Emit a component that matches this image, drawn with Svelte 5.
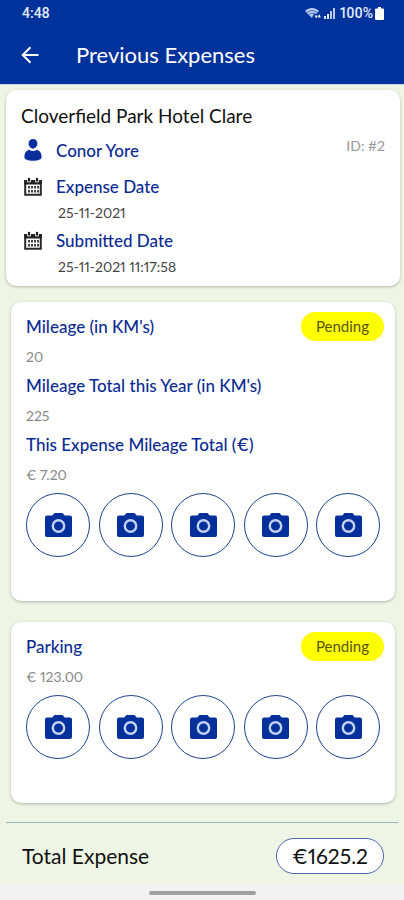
<script lang="ts">
  type Field = { label: string; value: string };
  type Expense = { status: string; fields: Field[] };

  const expenses: Expense[] = [
    {
      status: 'Pending',
      fields: [
        { label: "Mileage (in KM's)", value: '20' },
        { label: "Mileage Total this Year (in KM's)", value: '225' },
        { label: 'This Expense Mileage Total (€)', value: '€ 7.20' },
      ],
    },
    {
      status: 'Pending',
      fields: [{ label: 'Parking', value: '€ 123.00' }],
    },
  ];

  const dates: Field[] = [
    { label: 'Expense Date', value: '25-11-2021' },
    { label: 'Submitted Date', value: '25-11-2021 11:17:58' },
  ];

  const photoSlots = [1, 2, 3, 4, 5];
</script>

<div class="screen">
  <header>
    <div class="status-bar">
      <span>4:48</span>
      <div class="status-right">
        <svg width="17" height="13" viewBox="0 0 17 13" aria-hidden="true">
          <path d="M0 4C4 0 10 0 14 4L10.500 7.500V6.500H9L7 11Z" fill="#b9c8ee" />
          <path d="M2 5.500C5 3 9 3 12 5.500M4 7.500C6 6 8 6 9.500 7" fill="none" stroke="#00329b" stroke-width=".6" />
          <path d="M9.500 8.500l1.700 3 1.700-3zM12.500 10.500l1.700-3.500 1.700 3.500z" fill="#e4eafa" />
        </svg>
        <svg width="11" height="12" viewBox="0 0 11 12" aria-hidden="true">
          <path d="M0 9h2v3H0zM3 7h2v5H3z" fill="#e4eafa" />
          <path d="M6 4h2v8H6zM9 1h2v11H9z" fill="#b9c8ee" />
        </svg>
        <span class="percent">100%</span>
        <svg width="9" height="13" viewBox="0 0 9 13" aria-hidden="true">
          <path d="M3 0h3v1.500h2a1 1 0 0 1 1 1V12a1 1 0 0 1-1 1H1a1 1 0 0 1-1-1V2.500a1 1 0 0 1 1-1h2z" fill="#fff" />
        </svg>
      </div>
    </div>
    <div class="app-bar">
      <button class="back" aria-label="Back">
        <svg width="18" height="18" viewBox="0 0 18 18" fill="none" stroke="#fff" stroke-width="2">
          <path d="M17.500 9H2M9.500 1.200L1.700 9l7.800 7.800" />
        </svg>
      </button>
      <h1>Previous Expenses</h1>
    </div>
  </header>

  <main>
    <section class="card summary">
      <h2>Cloverfield Park Hotel Clare</h2>
      <div class="row person">
        <svg width="18" height="22" viewBox="0 0 18 22" fill="#0a2f9c" aria-hidden="true">
          <path d="M9 0a4.400 4.400 0 0 1 4.400 4.600C13.400 7.400 11.400 9.600 9 9.600S4.600 7.400 4.600 4.600A4.400 4.400 0 0 1 9 0z" />
          <path d="M5 10.800c2.400 1.700 5.600 1.700 8 0 3 .9 4.600 3.400 4.600 7.200 0 2.500-3.600 3.700-8.600 3.700S.4 20.500.4 18c0-3.800 1.600-6.300 4.600-7.200z" />
        </svg>
        <span class="label">Conor Yore</span>
        <span class="id">ID: #2</span>
      </div>
      {#each dates as date}
        <div class="row">
          <svg width="18" height="19" viewBox="0 0 18 19" aria-hidden="true">
            <path d="M1.200 4h15.600v13.800H1.200z" fill="#fff" stroke="#2a2a2a" stroke-width="2" />
            <path d="M.2 3h17.600v4.500H.2z" fill="#222" />
            <path d="M3.500.5h3v4.500h-3zM11.500.5h3v4.500h-3z" fill="#222" stroke="#fff" stroke-width=".8" />
            <path d="M4 9h2v2.500H4zM7 9h2v2.500H7zM10 9h2v2.500h-2zM13 9h2v2.500h-2zM4 13h2v2.500H4zM7 13h2v2.500H7zM10 13h2v2.500h-2zM13 13h2v2.500h-2z" fill="#444" />
          </svg>
          <span class="label">{date.label}</span>
        </div>
        <p class="date">{date.value}</p>
      {/each}
    </section>

    {#each expenses as expense}
      <section class="card expense">
        <span class="pill">{expense.status}</span>
        <dl>
          {#each expense.fields as field}
            <dt>{field.label}</dt>
            <dd>{field.value}</dd>
          {/each}
        </dl>
        <div class="photos">
          {#each photoSlots as slot}
            <button class="photo" aria-label="Photo {slot}">
              <svg width="27" height="24" viewBox="0 0 27 24" aria-hidden="true">
                <path d="M9.500 0h8l2.200 2.500H25a2 2 0 0 1 2 2V22a2 2 0 0 1-2 2H2a2 2 0 0 1-2-2V4.500a2 2 0 0 1 2-2h5.300z" fill="#04309c" />
                <circle cx="13.500" cy="13" r="5.700" fill="none" stroke="#c3d2f5" stroke-width="2.400" />
              </svg>
            </button>
          {/each}
        </div>
      </section>
    {/each}
  </main>

  <footer>
    <div class="total">
      <span>Total Expense</span>
      <strong>€1625.2</strong>
    </div>
  </footer>
  <div class="nav-bar"><div class="handle"></div></div>
</div>

<style>
  :global(body) { margin: 0; }

  .screen {
    min-height: 100vh;
    display: flex;
    flex-direction: column;
    background: #eef5e4;
    font-family: Lato, "Liberation Sans", sans-serif;
    font-variant-numeric: proportional-nums;
    color: #111;
  }

  header {
    background: #00329b;
    color: #fff;
    border-bottom: 1px solid #c9cdf2;
  }

  .status-bar {
    display: flex;
    justify-content: space-between;
    align-items: center;
    height: 26px;
    padding: 0 20px 0 22px;
    font-family: Roboto, sans-serif;
    font-size: 14px;
    font-weight: 500;
    color: #e4eafa;
  }
  .status-right { display: flex; align-items: center; gap: 2px; }
  .percent { margin-left: 3px; }

  .app-bar {
    display: flex;
    align-items: center;
    height: 58px;
    padding: 0 21px;
    gap: 37px;
  }
  .back { display: flex; padding: 0; border: 0; background: none; cursor: pointer; }
  h1 { margin: 0; font-size: 22px; line-height: 26px; font-weight: 400; }

  main { flex: 1; padding: 5px 4px 18px 6px; }

  .card {
    background: #fff;
    border-radius: 10px;
    box-shadow: 0 1px 3px rgba(60, 70, 50, 0.35);
  }

  .summary { padding: 10px 15px 6px; }
  h2 { margin: 0 0 4px; font-size: 19px; line-height: 32px; font-weight: 400; }

  .row { display: flex; align-items: center; gap: 14px; height: 28px; padding-left: 3px; }
  .person { margin-bottom: 8px; }
  .label, dt { font-size: 17px; font-weight: 500; color: #0b2b93; }
  .id { margin-left: auto; align-self: flex-start; font-size: 14px; line-height: 20px; color: #999; }
  .date { margin: 0; padding-left: 37px; font-size: 14px; line-height: 26px; color: #444; }

  .expense {
    position: relative;
    margin: 16px 5px 0;
    padding: 10px 15px 44px;
  }
  .expense + .expense { margin-top: 21px; }

  .pill {
    position: absolute;
    top: 10px;
    right: 11px;
    padding: 0 15px;
    border-radius: 15px;
    background: #ff0;
    font-size: 15px;
    line-height: 29px;
    color: #55551a;
  }

  dl { margin: 0 0 4px; }
  dt { line-height: 30px; }
  dd { margin: 0; font-size: 14px; line-height: 29px; color: #888; }

  .photos { display: flex; justify-content: space-between; }
  .photo {
    display: flex;
    align-items: center;
    justify-content: center;
    width: 64px;
    height: 64px;
    padding: 0;
    border: 1px solid #1d428f;
    border-radius: 50%;
    background: #fff;
    cursor: pointer;
  }

  footer { margin: 0 6px; border-top: 1px solid #9db4bb; }
  .total {
    display: flex;
    align-items: center;
    justify-content: space-between;
    height: 61px;
    padding: 4px 14px 0 16px;
    box-sizing: border-box;
    font-size: 21px;
  }
  .total strong {
    padding: 0 15px;
    border: 1px solid #4a63b5;
    border-radius: 18px;
    background: #fff;
    font-weight: 400;
    line-height: 34px;
  }

  .nav-bar { display: flex; justify-content: center; padding: 7px 0 5px; background: #f2f2f2; }
  .handle { width: 107px; height: 4px; border-radius: 2px; background: #a0a0a0; }
</style>
